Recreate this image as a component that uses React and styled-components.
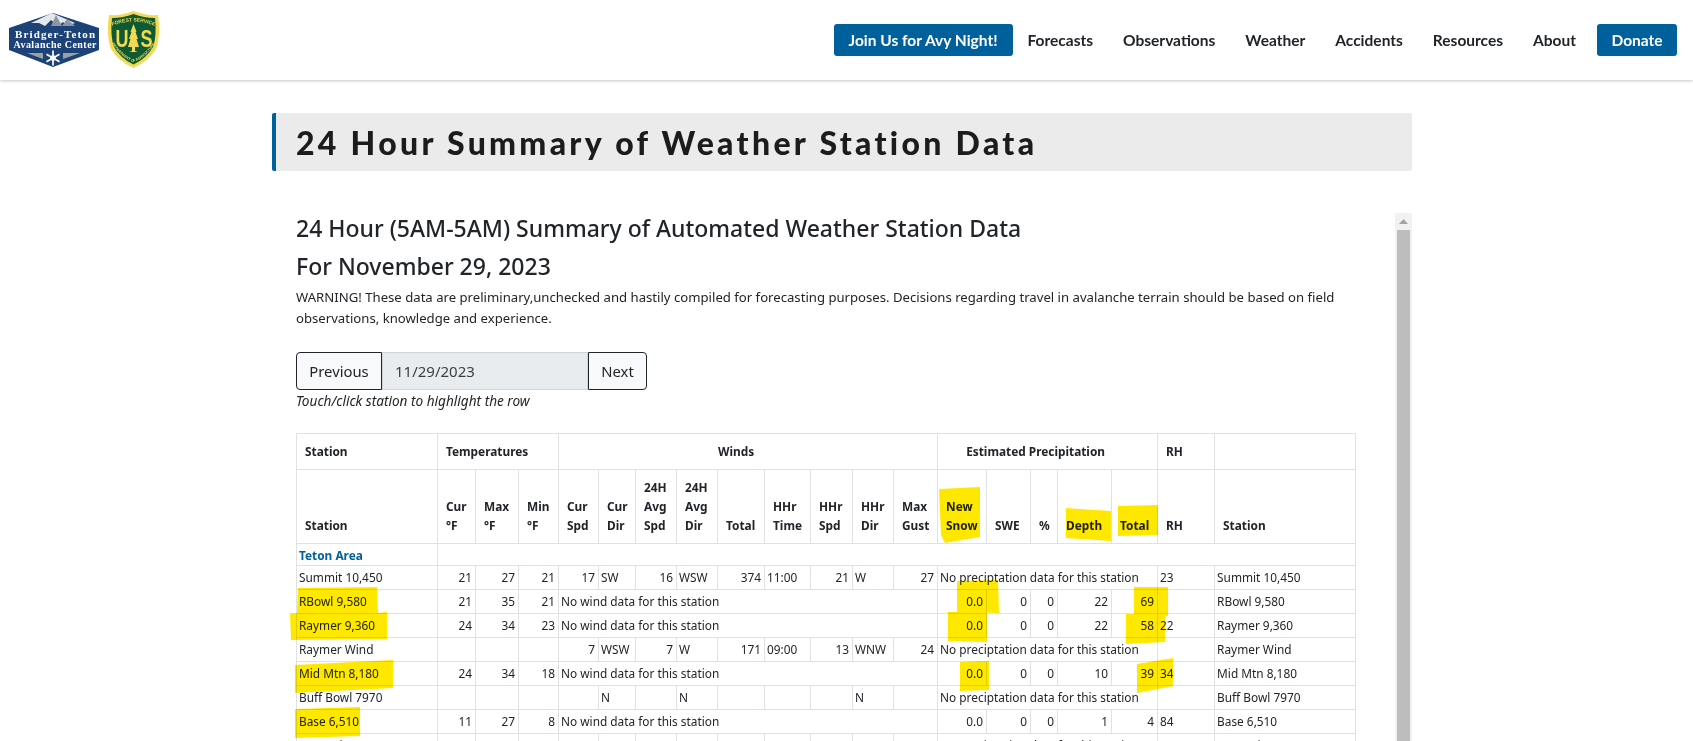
import React from 'react'
import styled, { createGlobalStyle } from 'styled-components'

const blue = '#00609c'
const line = '#dee2e6'

const Global = createGlobalStyle`
    html, body {
        margin: 0;
        height: 741px;
        overflow: hidden;
        background: #ffffff;
        color: #212529;
        font-family: "Noto Sans", "Open Sans", sans-serif;
    }
`

const Header = styled.header`
    display: flex;
    align-items: center;
    justify-content: space-between;
    height: 80px;
    padding: 0 16px 0 9px;
    box-sizing: border-box;
    background: #ffffff;
    box-shadow: 0 1px 3px rgba(0, 0, 0, 0.22);
`

const Logos = styled.div`
    display: flex;
    align-items: center;
    gap: 7px;
`

const Nav = styled.nav`
    display: flex;
    align-items: center;
    font-family: Lato, sans-serif;
    font-weight: 700;
    font-size: 15.5px;
`

const NavLink = styled.a`
    padding: 0 15px;
    color: #212529;
`

const NavButton = styled.a`
    display: flex;
    align-items: center;
    justify-content: center;
    width: ${p => p.$w}px;
    height: 32px;
    margin-left: ${p => p.$ml || 0}px;
    background: ${blue};
    border-radius: 3px;
    color: #ffffff;
`

const Main = styled.main`
    width: 1140px;
    margin: 33px 0 0 272px;
`

const TitleBar = styled.h1`
    margin: 0;
    height: 58px;
    padding-left: 20px;
    box-sizing: border-box;
    display: flex;
    align-items: center;
    background: #ebebeb;
    border-left: 4px solid ${blue};
    border-radius: 2px;
    font-family: Lato, sans-serif;
    font-weight: 900;
    font-size: 32px;
    letter-spacing: 3.3px;
    color: #1c1c1c;
`

const Panel = styled.div`
    display: flex;
    height: 528px;
    margin-top: 42px;
    overflow: hidden;
`

const Content = styled.div`
    width: 1059px;
    margin-left: 24px;
    margin-right: 40px;
`

const Heading = styled.h2`
    margin: 0;
    font-weight: 500;
    font-size: 23px;
    line-height: 38px;
    color: #212529;
    &:first-child {
        margin-top: -4px;
    }
`

const Warning = styled.p`
    margin: 2px 0 23px;
    font-size: 13.15px;
    line-height: 21px;
`

const DateGroup = styled.div`
    display: flex;
    height: 38px;
`

const PagerButton = styled.button`
    box-sizing: border-box;
    width: ${p => p.$w}px;
    padding: 0;
    background: #f8f9fa;
    border: 1px solid #212529;
    border-radius: ${p => (p.$end ? '0 4px 4px 0' : '4px 0 0 4px')};
    color: #212529;
    font-family: inherit;
    font-size: 14.8px;
`

const DateField = styled.div`
    box-sizing: border-box;
    display: flex;
    align-items: center;
    width: 206px;
    padding-left: 12px;
    background: #e9ecef;
    border: 1px solid #ced4da;
    font-size: 15px;
    color: #3a3f44;
`

const Hint = styled.em`
    display: block;
    font-size: 13.6px;
    line-height: 21px;
    margin-bottom: 22px;
`

const TableWrap = styled.div`
    position: relative;
`

const Grid = styled.table`
    table-layout: fixed;
    width: 1059px;
    border-collapse: collapse;
    font-size: 11.85px;
`

const Th = styled.th`
    padding: 0 8px 8px;
    border: 1px solid ${line};
    vertical-align: bottom;
    text-align: left;
    font-weight: 700;
    line-height: 19px;
`

const GroupTh = styled(Th)`
    padding: ${p => (p.$center ? '0 32px 0 8px' : '0 8px')};
    vertical-align: middle;
    text-align: ${p => (p.$center ? 'center' : 'left')};
`

const HeadRow = styled.tr`
    height: ${p => p.$h}px;
`

const BodyRow = styled.tr`
    height: 24px;
`

const SectionRow = styled.tr`
    height: 22px;
`

const SectionName = styled.td`
    padding: 0 3px 0 2px;
    border: 1px solid ${line};
    color: ${blue};
    font-weight: 700;
`

const Td = styled.td`
    padding: 0 3px 1px 2px;
    border: 1px solid ${line};
    text-align: ${p => (p.$left ? 'left' : 'right')};
    white-space: nowrap;
    overflow: hidden;
`

const Marks = styled.svg`
    position: absolute;
    left: 0;
    top: 0;
    overflow: visible;
    pointer-events: none;
    mix-blend-mode: multiply;
`

const ScrollTrack = styled.div`
    display: flex;
    flex-direction: column;
    align-items: center;
    width: 17px;
    background: #f1f1f1;
`

const ScrollUp = styled.div`
    display: flex;
    align-items: center;
    justify-content: center;
    height: 17px;
`

const ScrollThumb = styled.div`
    flex: 1;
    width: 13px;
    background: #bdbdbd;
`

const widths = [141, 38, 43, 40, 40, 37, 41, 41, 47, 46, 42, 41, 44, 49, 44, 27, 54, 46, 57, 141]

const headers = [
    ['Station'],
    ['Cur', '°F'], ['Max', '°F'], ['Min', '°F'],
    ['Cur', 'Spd'], ['Cur', 'Dir'], ['24H', 'Avg', 'Spd'], ['24H', 'Avg', 'Dir'],
    ['Total'], ['HHr', 'Time'], ['HHr', 'Spd'], ['HHr', 'Dir'], ['Max', 'Gust'],
    ['New', 'Snow'], ['SWE'], ['%'], ['Depth'], ['Total'], ['RH'], ['Station'],
]

const rows = [
    { name: 'Summit 10,450', temps: [21, 27, 21], wind: [17, 'SW', 16, 'WSW', 374, '11:00', 21, 'W', 27], rh: 23 },
    { name: 'RBowl 9,580', temps: [21, 35, 21], precip: ['0.0', 0, 0, 22, 69] },
    { name: 'Raymer 9,360', temps: [24, 34, 23], precip: ['0.0', 0, 0, 22, 58], rh: 22 },
    { name: 'Raymer Wind', temps: ['', '', ''], wind: [7, 'WSW', 7, 'W', 171, '09:00', 13, 'WNW', 24] },
    { name: 'Mid Mtn 8,180', temps: [24, 34, 18], precip: ['0.0', 0, 0, 10, 39], rh: 34 },
    { name: 'Buff Bowl 7970', temps: ['', '', ''], wind: ['', 'N', '', 'N', '', '', '', 'N', ''] },
    { name: 'Base 6,510', temps: [11, 27, 8], precip: ['0.0', 0, 0, 1, 4], rh: 84 },
    { name: 'Snow King 7,808', temps: ['', '', ''], wind: ['', '', '', '', '', '', '', '', ''] },
]

const leftWind = [1, 3, 5, 7]

const marks = [
    '298,588 377,587 378,613 387,612 387,639 291,640 290,613 297,613',
    '295,665 393,660 393,688 295,693',
    '295,709 360,707 360,736 295,738',
    '939,489 980,487 980,537 945,543 941,535',
    '1066,508 1080,509 1111,511 1111,541 1066,538',
    '1118,506 1158,505 1158,535 1118,536',
    '957,581 998,580 999,613 957,612',
    '948,612 987,612 987,642 948,641',
    '960,662 989,661 989,690 960,691',
    '1134,587 1168,587 1168,616 1134,617',
    '1126,614 1165,614 1165,642 1126,644',
    '1137,664 1173,658 1173,686 1137,693',
]

const AvalancheLogo = () => (
    <svg width="91" height="58" viewBox="0 0 91 58">
        <polygon points="0,17 44,2 90,17 90,39 44,56 0,39" fill="#1d4278" />
        <polygon points="22,12 43,2 66,12 58,15 54,11 49,15 42,9 36,15 30,12" fill="#e4e7ec" />
        <polygon points="42,15 47,4 53,15" fill="#8f96a0" />
        <polygon points="53,15 58,8 66,15" fill="#8f96a0" />
        <text x="6" y="27" textLength="80" lengthAdjust="spacing" fontFamily="Liberation Serif, serif" fontWeight="700" fontSize="11" fill="#ffffff">Bridger-Teton</text>
        <text x="4.5" y="37" textLength="83" lengthAdjust="spacing" fontFamily="Liberation Serif, serif" fontWeight="700" fontSize="10" fill="#ffffff">Avalanche Center</text>
        <polygon points="18,42 34,42 34,48" fill="#9aa0a8" />
        <polygon points="54,42 71,42 54,48" fill="#9aa0a8" />
        <g stroke="#ffffff" strokeWidth="1.7">
            <line x1="44" y1="39.5" x2="44" y2="54.5" />
            <line x1="37.5" y1="43.2" x2="50.5" y2="50.8" />
            <line x1="50.5" y1="43.2" x2="37.5" y2="50.8" />
        </g>
        <circle cx="44" cy="47" r="2.8" fill="#ffffff" />
    </svg>
)

const ForestLogo = () => (
    <svg width="53" height="58" viewBox="0 0 53 58">
        <path d="M2 4 Q14 5 26.5 0 Q39 5 51 4 Q54 24 49 38 Q42 50 26.5 57 Q11 50 4 38 Q-1 24 2 4 Z" fill="#f2da55" />
        <path d="M5 7 Q16 7 26.5 3 Q37 7 48 7 Q50 24 46 36 Q40 47 26.5 53.5 Q13 47 7 36 Q3 24 5 7 Z" fill="#0f5a32" />
        <defs>
            <path id="fsTop" d="M5 15 Q26.5 6 48 15" />
            <path id="fsBottom" d="M4 31 Q14 47 26.5 51 Q39 47 49 31" />
        </defs>
        <text fontFamily="Liberation Sans, sans-serif" fontWeight="700" fontSize="5" fill="#f2da55">
            <textPath href="#fsTop" startOffset="50%" textAnchor="middle">FOREST SERVICE</textPath>
        </text>
        <text fontFamily="Liberation Sans, sans-serif" fontWeight="700" fontSize="3.6" fill="#f2da55">
            <textPath href="#fsBottom" startOffset="50%" textAnchor="middle">DEPARTMENT OF AGRICULTURE</textPath>
        </text>
        <text x="8.5" y="36" textLength="13" lengthAdjust="spacingAndGlyphs" fontFamily="Liberation Sans, sans-serif" fontWeight="700" fontSize="23" fill="#f2da55">U</text>
        <text x="33.5" y="36" textLength="12" lengthAdjust="spacingAndGlyphs" fontFamily="Liberation Sans, sans-serif" fontWeight="700" fontSize="23" fill="#f2da55">S</text>
        <polygon points="26.5,13 29.5,21 28.5,21 31,28 29.5,28 32,36 28,36 28,40 31,41 22,41 25,40 25,36 21,36 23.5,28 22,28 24.5,21 23.5,21" fill="#f2da55" />
    </svg>
)

const Station = ({ row }) => (
    <BodyRow>
        <Td $left>{row.name}</Td>
        {row.temps.map((t, i) => <Td key={i}>{t}</Td>)}
        {row.wind
            ? row.wind.map((w, i) => <Td key={i} $left={leftWind.includes(i)}>{w}</Td>)
            : <Td $left colSpan={9}>No wind data for this station</Td>}
        {row.precip
            ? row.precip.map((p, i) => <Td key={i}>{p}</Td>)
            : <Td $left colSpan={5}>No preciptation data for this station</Td>}
        <Td $left>{row.rh}</Td>
        <Td $left>{row.name}</Td>
    </BodyRow>
)

const App = () => {
    return (
        <>
            <Global />
            <Header>
                <Logos>
                    <AvalancheLogo />
                    <ForestLogo />
                </Logos>
                <Nav>
                    <NavButton $w={179}>Join Us for Avy Night!</NavButton>
                    <NavLink>Forecasts</NavLink>
                    <NavLink>Observations</NavLink>
                    <NavLink>Weather</NavLink>
                    <NavLink>Accidents</NavLink>
                    <NavLink>Resources</NavLink>
                    <NavLink>About</NavLink>
                    <NavButton $w={80} $ml={6}>Donate</NavButton>
                </Nav>
            </Header>
            <Main>
                <TitleBar>24 Hour Summary of Weather Station Data</TitleBar>
                <Panel>
                    <Content>
                        <Heading>24 Hour (5AM-5AM) Summary of Automated Weather Station Data</Heading>
                        <Heading>For November 29, 2023</Heading>
                        <Warning>
                            WARNING! These data are preliminary,unchecked and hastily compiled for forecasting purposes. Decisions regarding travel in avalanche terrain should be based on field observations, knowledge and experience.
                        </Warning>
                        <DateGroup>
                            <PagerButton $w={86}>Previous</PagerButton>
                            <DateField>11/29/2023</DateField>
                            <PagerButton $w={59} $end>Next</PagerButton>
                        </DateGroup>
                        <Hint>Touch/click station to highlight the row</Hint>
                        <TableWrap>
                            <Grid>
                                <colgroup>
                                    {widths.map((w, i) => <col key={i} width={w} />)}
                                </colgroup>
                                <thead>
                                    <HeadRow $h={36}>
                                        <GroupTh>Station</GroupTh>
                                        <GroupTh colSpan={3}>Temperatures</GroupTh>
                                        <GroupTh colSpan={9} $center>Winds</GroupTh>
                                        <GroupTh colSpan={5} $center>Estimated Precipitation</GroupTh>
                                        <GroupTh>RH</GroupTh>
                                        <GroupTh />
                                    </HeadRow>
                                    <HeadRow $h={74}>
                                        {headers.map((h, i) => (
                                            <Th key={i}>
                                                {h.map((word, j) => <div key={j}>{word}</div>)}
                                            </Th>
                                        ))}
                                    </HeadRow>
                                </thead>
                                <tbody>
                                    <SectionRow>
                                        <SectionName>Teton Area</SectionName>
                                        <Td colSpan={19} />
                                    </SectionRow>
                                    {rows.map(r => <Station key={r.name} row={r} />)}
                                </tbody>
                            </Grid>
                            <Marks width="1059" height="330" viewBox="296 433 1059 330">
                                {marks.map((m, i) => <polygon key={i} points={m} fill="#ffe800" />)}
                            </Marks>
                        </TableWrap>
                    </Content>
                    <ScrollTrack>
                        <ScrollUp>
                            <svg width="9" height="5" viewBox="0 0 9 5"><polygon points="4.5,0 9,5 0,5" fill="#a3a3a3" /></svg>
                        </ScrollUp>
                        <ScrollThumb />
                    </ScrollTrack>
                </Panel>
            </Main>
        </>
    )
}

export default App
